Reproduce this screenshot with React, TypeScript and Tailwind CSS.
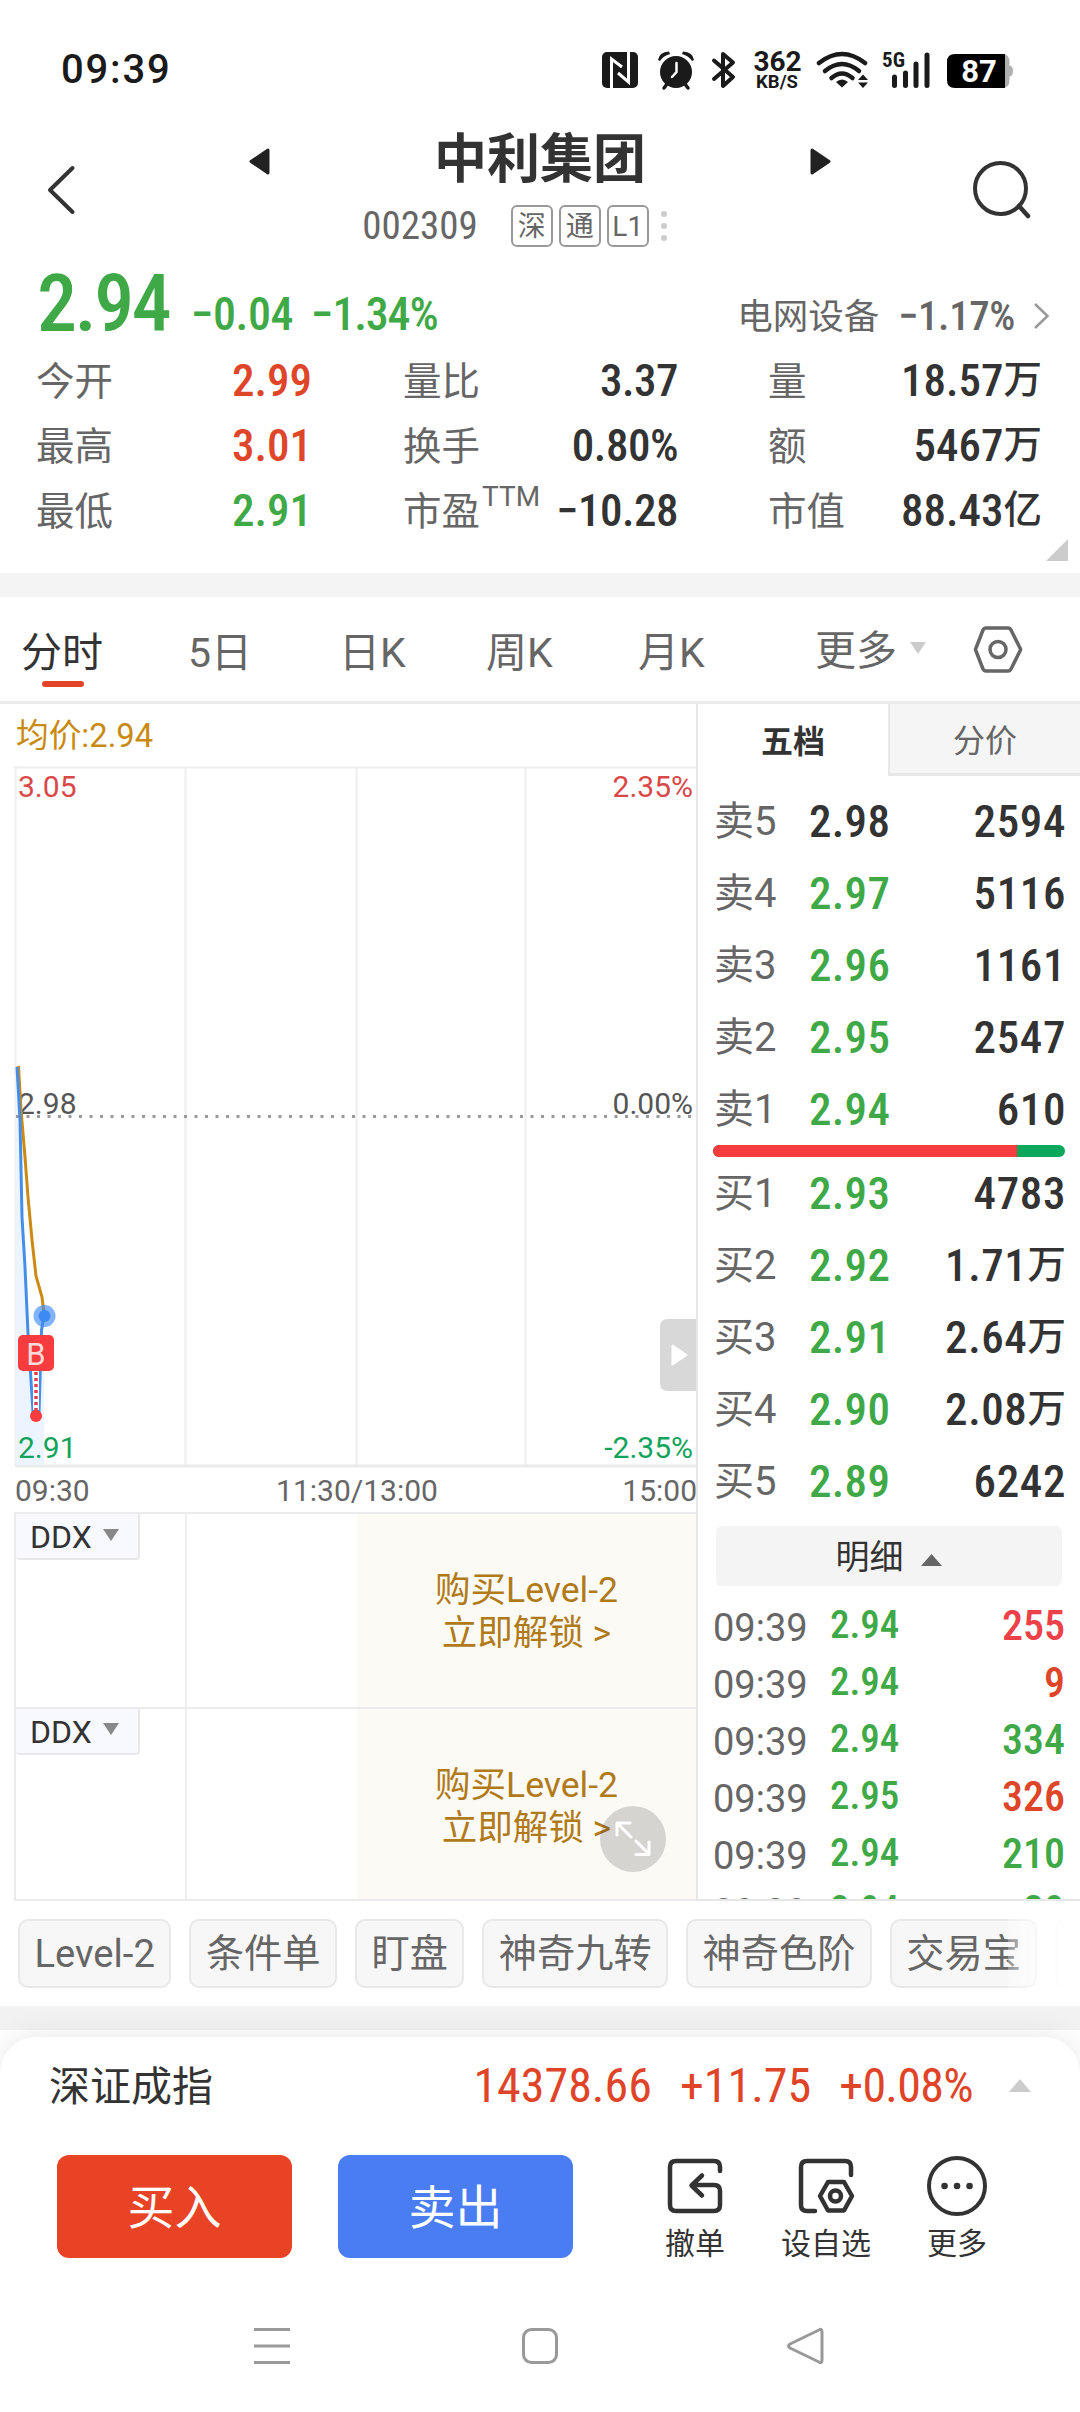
import clsx from "clsx";
import type { ReactNode } from "react";

const GREEN = "text-[#3fa947]";
const RED = "text-[#de4529]";
const DARK = "text-[#333333]";

const NUM = "font-['Roboto_Condensed','Noto_Sans_CJK_SC',sans-serif] font-medium";
const NUM_THIN = "font-['Roboto_Condensed','Noto_Sans_CJK_SC',sans-serif] font-normal";

const stats = [
  ["今开", "2.99", RED, "量比", "3.37", "量", "18.57", "万"],
  ["最高", "3.01", RED, "换手", "0.80%", "额", "5467", "万"],
  ["最低", "2.91", GREEN, "市盈", "−10.28", "市值", "88.43", "亿"],
];

const periods = ["分时", "5日", "日K", "周K", "月K"];

const sells = [
  { label: "卖5", price: "2.98", volume: "2594", color: DARK },
  { label: "卖4", price: "2.97", volume: "5116", color: GREEN },
  { label: "卖3", price: "2.96", volume: "1161", color: GREEN },
  { label: "卖2", price: "2.95", volume: "2547", color: GREEN },
  { label: "卖1", price: "2.94", volume: "610", color: GREEN },
];

const buys = [
  { label: "买1", price: "2.93", volume: "4783", color: GREEN },
  { label: "买2", price: "2.92", volume: "1.71", unit: "万", color: GREEN },
  { label: "买3", price: "2.91", volume: "2.64", unit: "万", color: GREEN },
  { label: "买4", price: "2.90", volume: "2.08", unit: "万", color: GREEN },
  { label: "买5", price: "2.89", volume: "6242", color: GREEN },
];

const ticks = [
  { price: "2.94", volume: "255", color: "text-[#ee4048]" },
  { price: "2.94", volume: "9", color: RED },
  { price: "2.94", volume: "334", color: GREEN },
  { price: "2.95", volume: "326", color: RED },
  { price: "2.94", volume: "210", color: GREEN },
  { price: "2.94", volume: "29", color: GREEN },
];

const chips = ["Level-2", "条件单", "盯盘", "神奇九转", "神奇色阶", "交易宝"];

const StatusBar = () => (
  <div className="flex h-[138px] items-center pl-[61px] pt-[2px] text-[#1a1a1a]">
    <span className="w-[541px] text-[40px] font-medium tracking-[1.800px]">09:39</span>
    <svg width="420" height="48" viewBox="0 0 420 48" fill="none">
      {/* nfc */}
      <rect x="0" y="6" width="36" height="36" rx="5" fill="#1a1a1a" />
      <path d="M9.500 42V13L20 21M26.500 6V36L16 27" stroke="#fff" strokeWidth="3" />
      {/* alarm */}
      <circle cx="74" cy="26" r="16" fill="#1a1a1a" />
      <path d="M56 14Q57 6 67 5.500L68 8Q61 10 58 15ZM92 14Q91 6 81 5.500L80 8Q87 10 90 15Z" fill="#1a1a1a" />
      <path d="M65 38L62 42M83 38L86 42" stroke="#1a1a1a" strokeWidth="3.500" strokeLinecap="round" />
      <path d="M74.500 17V26L70 31" stroke="#fff" strokeWidth="2.500" strokeLinecap="round" />
      {/* bluetooth */}
      <path d="M112 14.500L131 31L121 40V8L131 16.500L112 33" stroke="#1a1a1a" strokeWidth="4" strokeLinecap="round" strokeLinejoin="round" />
      {/* wifi */}
      <path d="M217 17Q240 -1 263 17" stroke="#1a1a1a" strokeWidth="4.500" strokeLinecap="round" />
      <path d="M223 25Q240 11 257 25" stroke="#1a1a1a" strokeWidth="4.500" strokeLinecap="round" />
      <path d="M229.500 32Q240 23 250.500 32" stroke="#1a1a1a" strokeWidth="4.500" strokeLinecap="round" />
      <path d="M234 36Q240 31 246 36L240 41.500Z" fill="#1a1a1a" />
      <path d="M256 34L261 28.500L266 34ZM256 36.500H266L261 42Z" fill="#1a1a1a" />
      {/* signal */}
      <path d="M292.500 31V39.500M303.500 27V39.500M314 18V39.500M325 9V39.500" stroke="#1a1a1a" strokeWidth="5" strokeLinecap="round" />
      {/* battery */}
      <path d="M398 8H400Q407.500 8 407.500 16V19.500Q411 20 411 25Q411 30 407.500 30.500V34Q407.500 42 400 42H398Z" fill="#b0b0b0" />
      <path d="M403 8H353Q345 8 345 16V34Q345 42 353 42H403Z" fill="#000" />
      <text x="377" y="36" textAnchor="middle" className="fill-white font-['Roboto'] text-[31px] font-bold">
        87
      </text>
      <text x="175.500" y="25" textAnchor="middle" className="fill-[#1a1a1a] font-['Roboto'] text-[28px] font-bold">
        362
      </text>
      <text x="175" y="41.500" textAnchor="middle" className="fill-[#1a1a1a] font-['Roboto'] text-[18.500px] font-bold">
        KB/S
      </text>
      <text x="291.500" y="20.500" textAnchor="middle" className="fill-[#1a1a1a] font-['Roboto_Condensed'] text-[21px] font-bold">
        5G
      </text>
    </svg>
  </div>
);

const Badge = ({ children }: { children: ReactNode }) => (
  <span className="flex h-[42px] w-[42px] items-center justify-center rounded-[6px] border-2 border-[#999999] pt-[1px] text-[28px] leading-none">
    {children}
  </span>
);

const Header = () => (
  <header className="flex h-[122px] items-start text-[#333333]">
    <svg width="249" height="100" viewBox="0 0 249 100" fill="none">
      <path d="M72.500 30L50 52L72.500 74" stroke="#333" strokeWidth="4" strokeLinecap="round" strokeLinejoin="round" />
    </svg>
    <svg width="21" height="50" viewBox="0 0 21 50">
      <path d="M19 12L2 23.500L19 35Z" fill="#222" stroke="#222" strokeWidth="3" strokeLinejoin="round" />
    </svg>
    <div className="flex w-[540px] flex-col items-center">
      <h1 className="h-[46px] text-[53px] font-bold leading-[45px]">中利集团</h1>
      <div className="mt-[20px] flex h-[44px] items-center gap-[6px] pr-[51px] text-[#666666]">
        <span className={clsx(NUM_THIN, "mr-[27px] text-[39px] leading-none")}>002309</span>
        <Badge>深</Badge>
        <Badge>通</Badge>
        <Badge>L1</Badge>
        <div className="ml-[6px] flex flex-col gap-[6px]">
          <i className="h-[6px] w-[6px] rounded-full bg-[#cccccc]" />
          <i className="h-[6px] w-[6px] rounded-full bg-[#cccccc]" />
          <i className="h-[6px] w-[6px] rounded-full bg-[#cccccc]" />
        </div>
      </div>
    </div>
    <svg width="21" height="50" viewBox="0 0 21 50">
      <path d="M2 12L19 23.500L2 35Z" fill="#222" stroke="#222" strokeWidth="3" strokeLinejoin="round" />
    </svg>
    <svg width="249" height="100" viewBox="0 0 249 100" fill="none">
      <circle cx="169.500" cy="50.500" r="25.500" stroke="#333" strokeWidth="4" />
      <path d="M188 68L197 78" stroke="#333" strokeWidth="4.500" strokeLinecap="round" />
    </svg>
  </header>
);

const Quote = () => (
  <section className="h-[313px] bg-white">
    <div className="flex h-[87px] items-start pl-[37px] pr-[30px]">
      <span className={clsx(NUM, GREEN, "w-[154px] text-[80px] leading-[88px] tracking-[-2.500px]")}>2.94</span>
      <span className={clsx(NUM, GREEN, "w-[120px] pt-[31px] text-[46px] leading-[46px] tracking-[-.5px]")}>−0.04</span>
      <span className={clsx(NUM, GREEN, "pt-[31px] text-[46px] leading-[46px] tracking-[-1.200px]")}>−1.34%</span>
      <div className="ml-auto flex items-center pt-[31px] text-[#666666]">
        <span className="pt-[3px] text-[35.500px] leading-[46px]">电网设备</span>
        <span className={clsx(NUM, "ml-[19px] text-[41px] leading-[46px] tracking-[-.4px]")}>−1.17%</span>
        <svg className="ml-[18px]" width="17" height="28" viewBox="0 0 17 28" fill="none">
          <path d="M2 2L14.500 14L2 26" stroke="#999" strokeWidth="2.500" />
        </svg>
      </div>
    </div>
    {stats.map(([a, av, color, b, bv, c, cv, unit]) => (
      <div key={a} className="flex h-[65px] items-center pl-[36px] pt-[2px] text-[38.500px] text-[#666666]">
        <span className="w-[196px] pt-[2px]">{a}</span>
        <span className={clsx(NUM, color, "w-[171px] text-[45px] leading-none")}>{av}</span>
        <span className="relative w-[80px] pt-[2px]">
          {b}
          {b === "市盈" && <sup className="absolute left-[79px] top-[2px] text-[28px] leading-none">TTM</sup>}
        </span>
        <span className={clsx(NUM, DARK, "w-[195px] text-right text-[45px] leading-none tracking-[-.5px]")}>{bv}</span>
        <span className="ml-[90px] w-[80px] pt-[2px]">{c}</span>
        <span className={clsx(NUM, DARK, "flex w-[194px] items-center justify-end text-[45px] leading-none")}>
          {cv}
          <span className="text-[38.500px]">{unit}</span>
        </span>
      </div>
    ))}
    <svg className="ml-auto mr-[12px] mt-[-3px] block" width="22" height="22">
      <path d="M22 0V22H0Z" fill="#ccc" />
    </svg>
  </section>
);

const PeriodTabs = () => (
  <nav className="grid h-[107px] grid-cols-[167px_151px_147px_152px_177px_157px_auto] border-b-[3px] border-[#ebebeb] bg-white pl-[21px] text-[41px] text-[#666666]">
    {periods.map((p, i) => (
      <div key={p} className={clsx("flex flex-col items-start pt-[26px]", i === 0 && DARK)}>
        <span className="leading-[60px]">{p}</span>
        {i === 0 && <i className="ml-[21px] mt-[-2px] h-[6px] w-[42px] rounded-full bg-[#e2432a]" />}
      </div>
    ))}
    <div className="flex items-center gap-[12px] leading-[60px]">
      <span className="pt-[3px]">更多</span>
      <svg width="18" height="12" className="mb-[3px]">
        <path d="M1 0H17L9 12Z" fill="#ccc" />
      </svg>
    </div>
    <svg className="mt-[27px]" width="52" height="50" viewBox="0 0 52 50" fill="none" stroke="#666" strokeWidth="3.500" strokeLinejoin="round">
      <path d="M14 4H36Q38 4 39 6L48 24Q49 25.500 48 27L39 45Q38 47 36 47H14Q12 47 11 45L4 27Q3 25.500 4 24L11 6Q12 4 14 4Z" />
      <circle cx="26" cy="25.500" r="8" />
    </svg>
  </nav>
);

// Intraday line chart, y axis runs from the top of the grid to the time labels
const Chart = () => (
  <svg className="block" width="696" height="746" viewBox="0 766 696 746" fill="none">
    <path d="M15.500 766V1466M185.500 767V1466M356.500 767V1466M525.500 767V1466" stroke="#eee" strokeWidth="2" />
    <path d="M15 767.500H696" stroke="#eee" strokeWidth="2" />
    <path d="M15 1466H696" stroke="#ebebeb" strokeWidth="3" />
    <path d="M17 1067L20 1120L22 1217L25 1267L28 1333L33 1412L36 1418L39 1412L41.500 1330L44 1316V1465H16V1067Z" fill="#ecf4ff" />
    <path d="M16 1116.500H696" stroke="#999" strokeWidth="3" strokeDasharray="3 7.500" />
    <g className="font-['Roboto'] text-[30px]">
      <text x="18" y="797" className="fill-[#d94848]">3.05</text>
      <text x="693" y="797" textAnchor="end" className="fill-[#d94848]">2.35%</text>
      <text x="18" y="1114" className="fill-[#555555]">2.98</text>
      <text x="693" y="1114" textAnchor="end" className="fill-[#555555]">0.00%</text>
      <text x="18" y="1458" className="fill-[#12a35a]">2.91</text>
      <text x="693" y="1458" textAnchor="end" className="fill-[#12a35a]">-2.35%</text>
      <text x="15" y="1500.500" className="fill-[#666666]">09:30</text>
      <text x="357" y="1500.500" textAnchor="middle" className="fill-[#666666]">11:30/13:00</text>
      <text x="697" y="1500.500" textAnchor="end" className="fill-[#666666]">15:00</text>
    </g>
    <path d="M18.500 1066L21 1110L25 1157L28 1197L32 1240L36 1276L42 1297L44 1314" stroke="#cc8a14" strokeWidth="3" />
    <path d="M17 1067L20 1120L22 1217L25 1267L28 1333L33 1412M39 1412L41.500 1330L44 1316" stroke="#458ee8" strokeWidth="3" />
    <circle cx="44.500" cy="1316" r="11" fill="#3d8af5" fillOpacity=".65" />
    <circle cx="44.500" cy="1316" r="6" fill="#3d8af5" />
    <path d="M36 1371V1410" stroke="#fff" strokeWidth="6" />
    <path d="M36 1372V1412" stroke="#e04048" strokeWidth="3.500" strokeDasharray="3 3" />
    <circle cx="36" cy="1416" r="6" fill="#f63c3e" />
    <rect x="18" y="1335" width="36" height="36" rx="5" fill="#f63c3e" />
    <text x="36" y="1364.500" textAnchor="middle" className="fill-[#fdd9d9] font-['Roboto'] text-[31px]">B</text>
    <path d="M696 1319H668Q660 1319 660 1327V1383Q660 1391 668 1391H696Z" fill="#d8d8d8" />
    <path d="M672.500 1345.500V1364.500L686.500 1355Z" fill="#fff" stroke="#fff" strokeWidth="2" strokeLinejoin="round" />
  </svg>
);

const LockedPanel = ({ children }: { children?: ReactNode }) => (
  <div className="relative ml-[14px] flex h-[194.500px] border-l-2 border-t-2 border-[#ebebeb] last:border-b-2">
    <div className="flex h-[46px] w-[124px] items-center gap-[10px] rounded-b-[4px] border-b-2 border-r-2 border-[#e8e8e8] bg-[#f8f9fe] pl-[14px] pt-[2px] text-[32px] leading-none text-[#333333]">
      DDX
      <svg width="18" height="12" className="mb-[5px]">
        <path d="M1 0H17L9 12Z" fill="#888" />
      </svg>
    </div>
    <div className="ml-[45px] w-[2px] bg-[#eeeeee]" />
    <div className="ml-auto flex w-[339px] flex-col items-center bg-[#fcfaf5] pt-[55px] text-[35.500px] leading-[43px] text-[#b07a1a]">
      <span>购买Level-2</span>
      <span>立即解锁 &gt;</span>
    </div>
    {children}
  </div>
);

type Level = { label: string; price: string; volume: string; unit?: string; color: string };

const LevelRow = ({ label, price, volume, unit, color }: Level) => (
  <div className="flex h-[72px] shrink-0 items-center pl-[16px] pr-[14px] pt-[1px]">
    <span className="w-[95px] text-[40px] text-[#666666]">{label}</span>
    <span className={clsx(NUM, color, "text-[45px] leading-none tracking-[.3px]")}>{price}</span>
    <span className={clsx(NUM, DARK, "ml-auto flex items-center text-[45px] leading-none tracking-[.6px]")}>
      {volume}
      {unit && <span className="text-[38.500px] tracking-normal">{unit}</span>}
    </span>
  </div>
);

const OrderBook = () => (
  <aside className="flex h-[1197px] w-[384px] flex-col overflow-hidden border-b-2 border-l-2 border-[#e6e6e6] bg-white">
    <div className="flex h-[72px] shrink-0 text-[32px]">
      <div className="flex w-[190px] items-center justify-center pt-[3px] font-bold text-[#333333]">五档</div>
      <div className="flex w-[192px] items-center justify-center border-b-[3px] border-l-2 border-[#e8e8e8] bg-[#f5f5f5] pt-[5px] text-[#666666]">
        分价
      </div>
    </div>
    <div className="h-[9px] shrink-0" />
    {sells.map((l) => (
      <LevelRow key={l.label} {...l} />
    ))}
    <div className="ml-[15px] flex h-[12px] w-[352px] shrink-0 overflow-hidden rounded-full bg-[#0ba85c]">
      <div className="w-[304px] bg-[#f63c3e]" />
    </div>
    {buys.map((l) => (
      <LevelRow key={l.label} {...l} />
    ))}
    <button className="ml-[18px] mt-[9px] flex h-[60px] w-[346px] shrink-0 items-center justify-center gap-[16px] rounded-[6px] bg-[#f4f4f4] pt-[2px] text-[34px] text-[#333333]">
      明细
      <svg width="23" height="12" className="mt-[6px]">
        <path d="M11.500 0L22 12H1Z" fill="#666" />
      </svg>
    </button>
    <div className="h-[11px] shrink-0" />
    {ticks.map((t, i) => (
      <div key={i} className="flex h-[57px] shrink-0 items-center pl-[15px] pr-[15px]">
        <span className="w-[117px] pt-[5px] text-[38px] leading-none text-[#666666]">09:39</span>
        <span className={clsx(NUM, GREEN, "text-[39px] leading-none")}>{t.price}</span>
        <span className={clsx(NUM, t.color, "ml-auto text-[42px] leading-none")}>{t.volume}</span>
      </div>
    ))}
  </aside>
);

const Chips = () => (
  <div className="relative flex h-[105px] gap-[18px] overflow-hidden bg-white pl-[18px] pt-[18px] text-[38.200px] text-[#666666]">
    {chips.map((c) => (
      <span key={c} className="flex h-[69px] shrink-0 items-center rounded-[10px] border-2 border-[#e8e8e8] bg-[#f7f7f7] px-[14.500px] pt-[3px]">
        {c}
      </span>
    ))}
    <span className="h-[69px] w-[60px] shrink-0 rounded-[10px] border-2 border-[#e8e8e8] bg-[#f7f7f7]" />
    <i className="absolute bottom-0 right-0 top-0 w-[72px] bg-linear-to-r from-white/30 to-white to-80%" />
  </div>
);

const ActionIcon = ({ label, children }: { label: string; children: ReactNode }) => (
  <div className="flex flex-col items-center text-[30px] leading-[42px] text-[#333333]">
    <svg width="62" height="68" viewBox="0 0 62 68" fill="none" stroke="#333" strokeWidth="4.500" strokeLinecap="round" strokeLinejoin="round">
      {children}
    </svg>
    {label}
  </div>
);

const BottomSheet = () => (
  <section className="relative mt-[7px] h-[375px] rounded-t-[36px] bg-white shadow-[0_0_30px_rgba(0,0,0,0.1)]">
    <div className="flex h-[98px] items-center pl-[49px] pr-[48px]">
      <span className="pt-[4px] text-[41px] text-[#333333]">深证成指</span>
      <div className={clsx(NUM_THIN, "ml-auto flex gap-[28px] text-[48px] text-[#e04428]")}>
        <span>14378.66</span>
        <span>+11.75</span>
        <span className="tracking-[-.7px]">+0.08%</span>
      </div>
      <svg className="ml-[35px]" width="24" height="14">
        <path d="M12 0L23 13H1Z" fill="#ccc" />
      </svg>
    </div>
    <div className="flex h-[123px] items-start pl-[57px] pt-[20px]">
      <button className="h-[103px] w-[235px] rounded-[12px] bg-[#e84325] pt-[4px] text-[47px] text-white">买入</button>
      <button className="ml-[46px] h-[103px] w-[235px] rounded-[12px] bg-[#4b7df2] pt-[4px] text-[47px] text-white">卖出</button>
      <div className="ml-[91px] grid grid-cols-[62px_90px_62px] gap-[55px]">
        <ActionIcon label="撤单">
          <path d="M56 16V12Q56 6 50 6H12Q6 6 6 12V50Q6 56 12 56H50Q56 56 56 50V36Q56 30 50 30H28M38 20.500L27.500 30.500L38 40.500" />
        </ActionIcon>
        <ActionIcon label="设自选">
          <path d="M56 20V12Q56 6 50 6H12Q6 6 6 12V50Q6 56 12 56H20" />
          <path d="M33 27H49L57 41L49 55.500H33L25 41Z" />
          <circle cx="40.500" cy="41" r="5.500" />
        </ActionIcon>
        <ActionIcon label="更多">
          <circle cx="31" cy="31" r="28" strokeWidth="4" />
          <path d="M18.500 31h.1M31 31h.1M43.500 31h.1" strokeWidth="6.500" />
        </ActionIcon>
      </div>
    </div>
    <div className="flex justify-between pl-[252px] pr-[255px] pt-[68px]">
      <svg width="40" height="40" fill="none" stroke="#999" strokeWidth="3">
        <path d="M2 3.500H38M2 20H38M2 36.500H38" />
      </svg>
      <svg className="ml-[3px]" width="40" height="40" fill="none" stroke="#999" strokeWidth="3">
        <rect x="3.500" y="3.500" width="33" height="33" rx="8" />
      </svg>
      <svg width="40" height="40" fill="none" stroke="#999" strokeWidth="3" strokeLinejoin="round">
        <path d="M34 4Q37 2 37 6V34Q37 38 34 36L5 22Q2 20 5 18Z" />
      </svg>
    </div>
  </section>
);

export default function App() {
  return (
    <main className="h-[2412px] w-[1080px] overflow-hidden bg-white font-['Roboto','Noto_Sans_CJK_SC',sans-serif]">
      <StatusBar />
      <Header />
      <Quote />
      <div className="h-[24px] bg-[#f4f4f4]" />
      <PeriodTabs />
      <div className="flex">
        <div className="w-[696px]">
          <div className="flex h-[62px] items-center pl-[16px] pt-[3px] text-[32.700px] text-[#c98a12]">均价:2.94</div>
          <Chart />
          <LockedPanel />
          <LockedPanel>
            <svg className="absolute left-[584px] top-[97px]" width="66" height="66" fill="none" stroke="#fff" strokeWidth="3" strokeLinecap="round" strokeLinejoin="round">
              <circle cx="33" cy="33" r="33" fill="#000" fillOpacity=".15" stroke="none" />
              <path d="M17 29V17H30M17 17L31 31M36 35L49 48M36 48.500H49V36" />
            </svg>
          </LockedPanel>
        </div>
        <OrderBook />
      </div>
      <Chips />
      <div className="h-[24px] bg-[#f2f2f2]" />
      <BottomSheet />
    </main>
  );
}
